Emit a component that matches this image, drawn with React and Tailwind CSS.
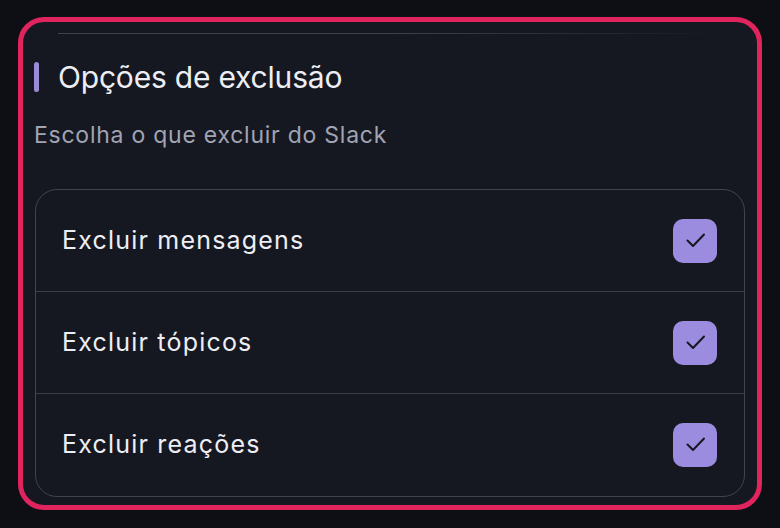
import React from "react";

function Check() {
  return (
    <div className="w-[44px] h-[44px] rounded-[10px] bg-[#9b8ce0] flex items-center justify-center">
      <svg width="24" height="24" viewBox="0 0 24 24" fill="none" stroke="#161821" strokeWidth="2" strokeLinecap="round" strokeLinejoin="round">
        <path d="M4.5 11.5l5.5 5.5L21 5.5" />
      </svg>
    </div>
  );
}

function Row({ label, last }) {
  return (
    <div className={"h-[102px] flex items-center justify-between pl-[26px] pr-[27px] " + (last ? "" : "border-b border-[#3b3d49]")}>
      <span className="text-[25px] text-[#eceef4] tracking-[1.2px]">{label}</span>
      <Check />
    </div>
  );
}

export default function App() {
  return (
    <div className="w-[780px] h-[528px] bg-[#0d0f15] pt-[17px] pl-[18px]" style={{ fontFamily: "Inter, 'Noto Sans', sans-serif" }}>
      <div className="w-[744px] h-[493px] border-[5px] border-[#e0245e] rounded-[26px] bg-[#161821] px-[11px] pt-[11px]">
        <div className="h-px mx-[24px] bg-gradient-to-r from-[#3e404c] via-[#3e404c] to-transparent" />
        <div className="flex items-center gap-[19px] mt-[28px] h-[30px]">
          <div className="w-[5px] h-[30px] rounded-full bg-[#9a8ad8]" />
          <span className="text-[30px] text-[#eceef4] leading-none tracking-[-0.2px]">Opções de exclusão</span>
        </div>
        <div className="mt-[28px] h-[30px] flex items-center text-[23px] text-[#a0a4b4] tracking-[0.75px]">Escolha o que excluir do Slack</div>
        <div className="mt-[39px] ml-[1px] w-[710px] rounded-[22px] border border-[#41434f]">
          <Row label="Excluir mensagens" />
          <Row label="Excluir tópicos" />
          <Row label="Excluir reações" last />
        </div>
      </div>
    </div>
  );
}
